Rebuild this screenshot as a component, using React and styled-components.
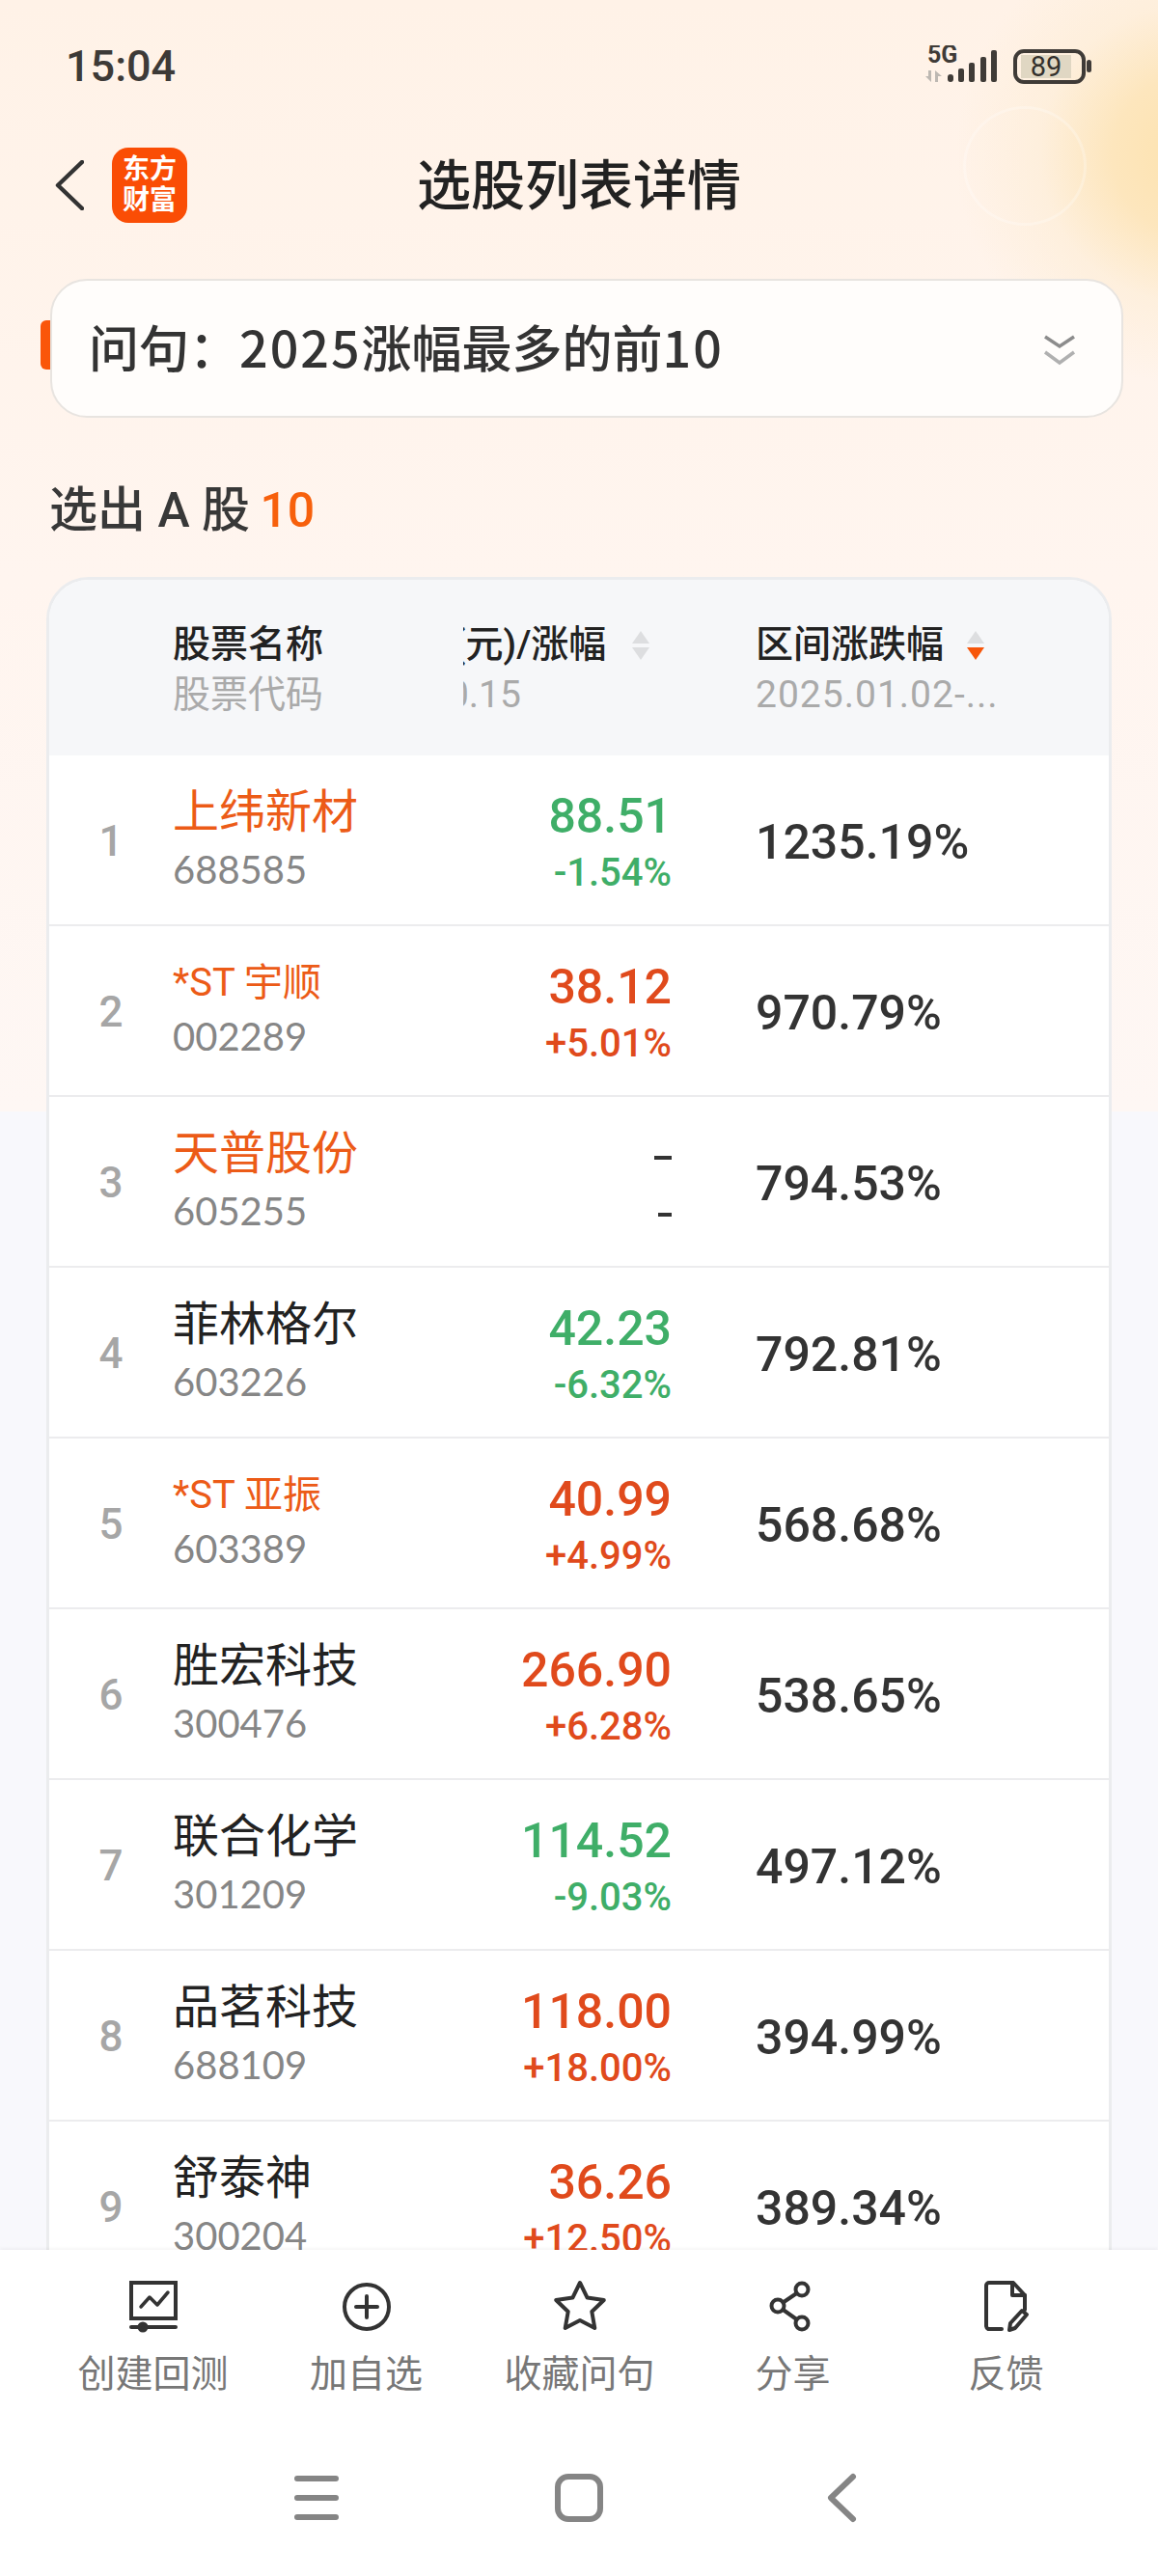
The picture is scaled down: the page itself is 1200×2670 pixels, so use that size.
import React from 'react';
import styled, { createGlobalStyle } from 'styled-components';

const GlobalStyle = createGlobalStyle`
  html, body {
    margin: 0;
    padding: 0;
    background: #fff;
  }
  * {
    box-sizing: border-box;
  }
`;

const RED = '#e04a1c';
const GREEN = '#3fae68';
const ORANGE = '#ec5b17';

const stocks = [
  { name: '上纬新材', code: '688585', price: '88.51', change: '-1.54%', range: '1235.19%', dir: 'down', hot: true },
  { name: '*ST 宇顺', code: '002289', price: '38.12', change: '+5.01%', range: '970.79%', dir: 'up', hot: true, small: true },
  { name: '天普股份', code: '605255', price: '-', change: '-', range: '794.53%', dir: 'none', hot: true },
  { name: '菲林格尔', code: '603226', price: '42.23', change: '-6.32%', range: '792.81%', dir: 'down' },
  { name: '*ST 亚振', code: '603389', price: '40.99', change: '+4.99%', range: '568.68%', dir: 'up', hot: true, small: true },
  { name: '胜宏科技', code: '300476', price: '266.90', change: '+6.28%', range: '538.65%', dir: 'up' },
  { name: '联合化学', code: '301209', price: '114.52', change: '-9.03%', range: '497.12%', dir: 'down' },
  { name: '品茗科技', code: '688109', price: '118.00', change: '+18.00%', range: '394.99%', dir: 'up' },
  { name: '舒泰神', code: '300204', price: '36.26', change: '+12.50%', range: '389.34%', dir: 'up' },
];

const dirColor = (dir) => (dir === 'up' ? RED : dir === 'down' ? GREEN : '#333');

const Page = styled.div`
  position: relative;
  width: 1200px;
  height: 2670px;
  display: flex;
  flex-direction: column;
  overflow: hidden;
  font-family: Roboto, "Noto Sans CJK SC", sans-serif;
  background:
    radial-gradient(ellipse 250px 240px at 1240px 160px, #fde2ad 0%, #fde6bd 35%, rgba(253, 236, 210, 0.55) 65%, rgba(253, 240, 225, 0) 100%),
    linear-gradient(to bottom, #fff2e7 0, #fff5ef 600px, #fef7f4 1152px, #f8f8fc 1152px);
`;

const Ring = styled.div`
  position: absolute;
  left: 998px;
  top: 110px;
  width: 128px;
  height: 124px;
  border-radius: 50%;
  border: 3px solid rgba(255, 255, 255, 0.25);
`;

const StatusBar = styled.div`
  height: 136px;
  flex: none;
  display: flex;
  align-items: center;
  justify-content: space-between;
  padding: 2px 68px 0 68px;
`;

const Time = styled.div`
  font-size: 45px;
  font-weight: 500;
  color: #3d3a37;
  line-height: 50px;
`;

const StatusIcons = styled.div`
  display: flex;
  align-items: center;
  gap: 15px;
`;

const Glyph = styled.svg`
  display: block;
  flex: none;
`;

const Header = styled.div`
  height: 112px;
  flex: none;
  display: flex;
  align-items: center;
  padding-left: 57px;
  position: relative;
`;

const Logo = styled.div`
  width: 78px;
  height: 78px;
  margin-left: 29px;
  border-radius: 17px;
  background: #fa4d05;
  color: #fff;
  font-size: 28px;
  font-weight: 700;
  line-height: 32px;
  text-align: center;
  padding-top: 7px;
`;

const Title = styled.div`
  position: absolute;
  left: 0;
  right: 0;
  text-align: center;
  font-size: 56px;
  font-weight: 500;
  color: #222;
  padding-bottom: 9px;
`;

const QueryBox = styled.div`
  position: relative;
  flex: none;
  height: 144px;
  margin: 41px 36px 0 52px;
  padding: 0 47px 0 38px;
  display: flex;
  align-items: center;
  justify-content: space-between;
  background: #fffdfb;
  border: 2px solid #e8e4e0;
  border-radius: 38px;
`;

const QueryMark = styled.div`
  position: absolute;
  left: -12px;
  top: 41px;
  width: 10px;
  height: 51px;
  background: #fa560a;
  border-radius: 6px 0 0 6px;
`;

const QueryText = styled.div`
  font-size: 52px;
  font-weight: 500;
  color: #333;
  white-space: nowrap;
  padding-bottom: 6px;
`;

const QueryDigits = styled.span`
  font-family: "Noto Sans CJK SC", sans-serif;
  letter-spacing: 2px;
`;

const QueryArrow = styled.div`
  padding-top: 4px;
`;

const ResultTitle = styled.div`
  flex: none;
  margin: 66px 0 0 51px;
  height: 60px;
  line-height: 60px;
  font-size: 50px;
  font-weight: 500;
  color: #383838;
  white-space: pre;
`;

const ResultCount = styled.span`
  color: #f7600c;
  margin-left: -2px;
`;

const TableClip = styled.div`
  flex: 1;
  min-height: 0;
  margin-top: 39px;
  padding: 0 48px;
  overflow: hidden;
`;

const Table = styled.div`
  border: 3px solid #ebecee;
  border-bottom: none;
  border-radius: 44px 44px 0 0;
  overflow: hidden;
  background: #fff;
`;

const Columns = styled.div`
  display: grid;
  grid-template-columns: 128px 301px 216px 1fr;
`;

const HeadRow = styled(Columns)`
  height: 182px;
  background: #f6f7f9;
  padding-top: 44px;
`;

const HeadCell = styled.div`
  grid-column: ${(p) => p.$col};
  display: flex;
  align-items: flex-start;
  padding-left: ${(p) => p.$pad || 0}px;
`;

const HeadText = styled.div`
  font-size: 39px;
  line-height: 46px;
  font-weight: 500;
  color: #222;
  white-space: nowrap;
`;

const HeadSub = styled.div`
  font-size: 39px;
  line-height: 46px;
  margin-top: 6px;
  margin-left: ${(p) => p.$shift || 0}px;
  letter-spacing: ${(p) => p.$track || 0}px;
  color: #aaa;
  white-space: nowrap;
`;

const ClipWindow = styled.div`
  width: 148px;
  overflow: hidden;
  flex: none;
`;

const Scrolled = styled.div`
  margin-left: -128px;
`;

const RangeHead = styled.div`
  width: 195px;
  flex: none;
`;

const SortIcon = styled.svg`
  width: 20px;
  height: 30px;
  flex: none;
  margin-top: 9px;
  margin-left: ${(p) => p.$gap}px;
`;

const Row = styled(Columns)`
  height: 177px;
  border-bottom: 2px solid #ececee;
  &:first-of-type {
    height: 176px;
  }
`;

const Rank = styled.div`
  font-size: 44px;
  line-height: 50px;
  color: #a6a6a6;
  font-weight: 500;
  text-align: center;
  align-self: center;
  padding-top: 2px;
`;

const NameCell = styled.div`
  padding-top: 31px;
`;

const Name = styled.div`
  height: ${(p) => (p.$small ? 52 : 56)}px;
  line-height: 56px;
  font-size: ${(p) => (p.$small ? 40 : 48)}px;
  color: ${(p) => (p.$hot ? ORANGE : '#222')};
  white-space: nowrap;
`;

const Code = styled.div`
  margin-top: 9px;
  height: 44px;
  line-height: 44px;
  font-size: 40px;
  font-family: Lato, sans-serif;
  color: #868686;
`;

const PriceCell = styled.div`
  padding-top: 35px;
  text-align: right;
  color: ${(p) => dirColor(p.$dir)};
`;

const Price = styled.div`
  height: 56px;
  line-height: 56px;
  font-size: 50px;
  font-weight: 500;
`;

const Change = styled.div`
  margin-top: 9px;
  height: 44px;
  line-height: 44px;
  font-size: 40px;
  font-weight: 500;
`;

const RangeCell = styled.div`
  padding: 5px 0 0 87px;
  align-self: center;
  font-size: 50px;
  font-weight: 500;
  color: #333;
`;

const Dash = styled.div`
  height: ${(p) => p.$h}px;
  display: flex;
  align-items: center;
  justify-content: flex-end;
  margin-top: ${(p) => p.$mt}px;
  &::after {
    content: '';
    width: ${(p) => p.$w}px;
    height: 4px;
    background: #333;
  }
`;

const TabBar = styled.div`
  flex: none;
  position: relative;
  height: 176px;
  padding: 31px 48px 0;
  display: grid;
  grid-template-columns: repeat(5, 221px);
  background: #fff;
  box-shadow: 0 -2px 3px rgba(0, 0, 0, 0.04);
`;

const Tab = styled.div`
  display: flex;
  flex-direction: column;
  align-items: center;
`;

const TabIcon = styled.svg`
  width: 56px;
  height: 56px;
  flex: none;
  fill: none;
  stroke: #333;
  stroke-width: 4;
  stroke-linecap: round;
  stroke-linejoin: round;
`;

const TabLabel = styled.div`
  margin-top: 20px;
  font-size: 39px;
  line-height: 44px;
  color: #777;
`;

const NavBar = styled.div`
  flex: none;
  height: 162px;
  background: #fff;
  display: grid;
  grid-template-columns: repeat(3, 272px);
  justify-content: center;
  align-items: center;
  justify-items: center;
`;

const NavIcon = styled.svg`
  width: 56px;
  height: 56px;
  fill: none;
  stroke: #858585;
  stroke-width: 6;
  stroke-linecap: round;
  stroke-linejoin: round;
`;

const SignalIcon = () => (
  <Glyph width="76" height="44" viewBox="0 0 76 44">
    <text x="2" y="18" fontSize="25" fontWeight="700" fontFamily="Roboto, sans-serif" fill="#3f3b37">5G</text>
    <path d="M6 26v12l-6-6h3v-6zM10 26v12h3v-6h4z" fill="#bdb8b2" />
    <rect x="23" y="30" width="6" height="8" rx="3" fill="#3f3b37" />
    <rect x="34" y="24" width="6" height="14" rx="2" fill="#3f3b37" />
    <rect x="45" y="18" width="6" height="20" rx="2" fill="#3f3b37" />
    <rect x="57" y="12" width="6" height="26" rx="2" fill="#3f3b37" />
    <rect x="68" y="5" width="6" height="33" rx="2" fill="#3f3b37" />
  </Glyph>
);

const BatteryIcon = () => (
  <Glyph width="82" height="36" viewBox="0 0 82 36">
    <rect x="8" y="6" width="52" height="24" fill="#e0d7c3" />
    <rect x="2" y="2" width="71" height="32" rx="9" fill="none" stroke="#3f3b37" strokeWidth="4" />
    <rect x="76" y="11" width="5" height="13" rx="2.5" fill="#3f3b37" />
    <text x="34" y="28" fontSize="29" textAnchor="middle" fontFamily="Roboto, sans-serif" fill="#33302c">89</text>
  </Glyph>
);

const BackIcon = () => (
  <Glyph width="30" height="52" viewBox="0 0 30 52">
    <path d="M28 2 3 26l25 24" fill="none" stroke="#333" strokeWidth="4.5" strokeLinecap="round" strokeLinejoin="round" />
  </Glyph>
);

const DoubleChevron = () => (
  <Glyph width="34" height="32" viewBox="0 0 34 32">
    <path d="M2 2l15 10 15-10" fill="none" stroke="#8c8c8c" strokeWidth="3.5" />
    <path d="M2 18l15 11 15-11" fill="none" stroke="#b0b0b0" strokeWidth="3.5" />
  </Glyph>
);

const Sort = ({ active, gap }) => (
  <SortIcon viewBox="0 0 20 30" $gap={gap}>
    <path d="M10 0l9 13H1z" fill="#dddee0" />
    <path d="M10 30l9-13H1z" fill={active ? '#f7560a' : '#dddee0'} />
  </SortIcon>
);

const tabs = [
  {
    label: '创建回测',
    icon: (
      <>
        <rect x="5" y="3" width="46" height="37" strokeLinejoin="miter" />
        <path d="M15 28l9-10 8 8 11-13" strokeWidth="3.5" />
        <path d="M5 49h46" />
        <circle cx="17" cy="49" r="3.5" fill="#333" />
      </>
    ),
  },
  {
    label: '加自选',
    icon: (
      <>
        <circle cx="28" cy="28" r="23" />
        <path d="M17 28h22M28 17v22" />
      </>
    ),
  },
  {
    label: '收藏问句',
    icon: <path d="M28 3l7.6 15.6 17.2 2.4-12.5 12 3 17-15.3-8.1L12.7 50l3-17L3.2 21l17.2-2.4z" />,
  },
  {
    label: '分享',
    icon: (
      <>
        <circle cx="37" cy="10" r="6.5" />
        <circle cx="12" cy="27" r="6.5" />
        <circle cx="37" cy="45" r="6.5" />
        <path d="M17.5 23.5 31.5 14M17.5 31 31.5 41" />
      </>
    ),
  },
  {
    label: '反馈',
    icon: (
      <>
        <path d="M23 51H9a4 4 0 0 1-2-3V6a3 3 0 0 1 3-3h25l12 13v15" />
        <path d="M34 3v13h13" />
        <path d="M31 52l1-7 12-13 5 4-12 14z" />
      </>
    ),
  },
];

const App = () => (
  <Page>
    <GlobalStyle />
    <Ring />
    <StatusBar>
      <Time>15:04</Time>
      <StatusIcons>
        <SignalIcon />
        <BatteryIcon />
      </StatusIcons>
    </StatusBar>

    <Header>
      <BackIcon />
      <Logo>东方<br />财富</Logo>
      <Title>选股列表详情</Title>
    </Header>

    <QueryBox>
      <QueryMark />
      <QueryText>{'问句\uFF1A'}<QueryDigits>2025</QueryDigits>涨幅最多的前<QueryDigits>10</QueryDigits></QueryText>
      <QueryArrow>
        <DoubleChevron />
      </QueryArrow>
    </QueryBox>

    <ResultTitle>选出 A 股 <ResultCount>10</ResultCount></ResultTitle>

    <TableClip>
      <Table>
        <HeadRow>
          <HeadCell $col={2}>
            <div>
              <HeadText>股票名称</HeadText>
              <HeadSub>股票代码</HeadSub>
            </div>
          </HeadCell>
          <HeadCell $col={3}>
            <ClipWindow>
              <Scrolled>
                <HeadText>最新价(元)/涨幅</HeadText>
                <HeadSub $shift={-8}>2025.10.15</HeadSub>
              </Scrolled>
            </ClipWindow>
            <Sort gap={26} />
          </HeadCell>
          <HeadCell $col={4} $pad={87}>
            <RangeHead>
              <HeadText>区间涨跌幅</HeadText>
              <HeadSub $track={1}>2025.01.02-...</HeadSub>
            </RangeHead>
            <Sort active gap={23} />
          </HeadCell>
        </HeadRow>
        {stocks.map((stock, index) => (
          <Row key={stock.code}>
            <Rank>{index + 1}</Rank>
            <NameCell>
              <Name $hot={stock.hot} $small={stock.small}>{stock.name}</Name>
              <Code>{stock.code}</Code>
            </NameCell>
            {stock.dir === 'none' ? (
              <PriceCell $dir="none">
                <Dash $h={56} $mt={0} $w={18} />
                <Dash $h={44} $mt={9} $w={14} />
              </PriceCell>
            ) : (
              <PriceCell $dir={stock.dir}>
                <Price>{stock.price}</Price>
                <Change>{stock.change}</Change>
              </PriceCell>
            )}
            <RangeCell>{stock.range}</RangeCell>
          </Row>
        ))}
      </Table>
    </TableClip>

    <TabBar>
      {tabs.map((tab) => (
        <Tab key={tab.label}>
          <TabIcon viewBox="0 0 56 56">{tab.icon}</TabIcon>
          <TabLabel>{tab.label}</TabLabel>
        </Tab>
      ))}
    </TabBar>

    <NavBar>
      <NavIcon viewBox="0 0 56 56">
        <path d="M8 8h40M8 28h40M8 48h40" />
      </NavIcon>
      <NavIcon viewBox="0 0 56 56">
        <rect x="6" y="6" width="44" height="44" rx="11" />
      </NavIcon>
      <NavIcon viewBox="0 0 56 56">
        <path d="M40 6 17 28l23 22" />
      </NavIcon>
    </NavBar>
  </Page>
);

export default App;
